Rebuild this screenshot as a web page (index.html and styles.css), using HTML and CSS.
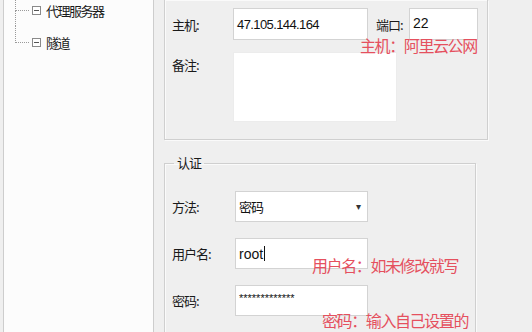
FILE: index.html
```html
<!DOCTYPE html>
<html lang="zh-CN">
<head>
    <meta charset="UTF-8">
    <meta name="viewport" content="width=device-width, initial-scale=1.0">
    <title>会话属性</title>
    <link rel="stylesheet" href="styles.css">
</head>
<body>
    <div class="window">
        <div class="tree">
            <ul class="tree-list">
                <li class="node">
                    <span class="branch"><i class="branch-up"></i><i class="branch-down"></i></span>
                    <span class="toggle"></span>
                    <span class="node-text">代理服务器</span>
                </li>
                <li class="node last">
                    <span class="branch"><i class="branch-up"></i><i class="branch-down"></i></span>
                    <span class="toggle"></span>
                    <span class="node-text">隧道</span>
                </li>
            </ul>
        </div>

        <div class="main">
            <div class="group group-conn">
                <div class="row">
                    <span class="label">主机:</span>
                    <div class="field host">47.105.144.164</div>
                    <span class="label port-label">端口:</span>
                    <div class="field port">22</div>
                </div>
                <div class="row row-top">
                    <span class="label">备注:</span>
                    <div class="field memo"></div>
                </div>
            </div>

            <fieldset class="group group-auth">
                <legend class="legend">认证</legend>
                <div class="auth-row">
                    <span class="label">方法:</span>
                    <div class="field combo"><span class="combo-text">密码</span><span class="combo-arrow">&#9662;</span></div>
                </div>
                <div class="auth-row">
                    <span class="label">用户名:</span>
                    <div class="field"><span class="latin">root</span><span class="caret"></span></div>
                </div>
                <div class="auth-row">
                    <span class="label">密码:</span>
                    <div class="field"><span class="stars">*************</span></div>
                </div>
                <div class="auth-row">
                    <span class="label"></span>
                    <div class="field"></div>
                </div>
            </fieldset>
        </div>

        <!-- 视频里的红色批注 -->
        <span class="note note-host">主机：阿里云公网</span>
        <span class="note note-user">用户名：如未修改就写</span>
        <span class="note note-pass">密码：输入自己设置的</span>
    </div>
</body>
</html>
```

FILE: styles.css
```css
body {
    margin: 0;
    background-color: #efefef;
    font-family: "Noto Sans CJK SC", "Liberation Sans", sans-serif;
    color: #222;
    overflow: hidden;
}
.window {
    position: relative;
    display: flex;
    width: 532px;
    height: 332px;
    overflow: hidden;
}

/* 左边的树 */
.tree {
    width: 151px;
    height: 332px;
    box-sizing: border-box;
    margin-left: 3px;
    background-color: #fcfcfc;
    border-left: 1px solid #cdcdcd;
    border-right: 1px solid #cdcdcd;
}
.tree-list {
    list-style: none;
    margin: -6px 0 0 0;
    padding: 0 0 0 11px;
}
.node {
    display: flex;
    align-items: center;
    height: 32px;
}
.branch {
    display: flex;
    flex-direction: column;
    width: 14px;
    height: 100%;
}
.branch i {
    display: block;
    flex: 1;
    border-left: 1px dotted #9a9a9a;
}
.branch-up {
    border-bottom: 1px dotted #9a9a9a;
}
.node.last .branch-down {
    border-left-color: transparent;
}
.toggle {
    position: relative;
    width: 7px;
    height: 7px;
    margin-left: 3px;
    border: 1px solid #8a8a8a;
    background-color: #fff;
}
.toggle::after {
    content: "";
    position: absolute;
    left: 1px;
    right: 1px;
    top: 3px;
    height: 1px;
    background-color: #555;
}
.node-text {
    margin-left: 5px;
    font-size: 13px;
    letter-spacing: -1.5px;
    color: #1a1a1a;
}

/* 右边的表单 */
.main {
    margin-left: 10px;
}
.group {
    box-sizing: border-box;
    border: 1px solid #cfcfcf;
    box-shadow: inset 1px 1px 0 #fafafa, 1px 1px 0 #fafafa;
}
.group-conn {
    width: 324px;
    border-top: none;
    padding: 8px 9px 17px 7px;
}
.row {
    display: flex;
    align-items: center;
}
.row-top {
    align-items: flex-start;
    margin-top: 12px;
}
.row-top .label {
    margin-top: 3px;
}
.label {
    width: 61px;
    flex-shrink: 0;
    font-size: 13px;
    letter-spacing: -1px;
    color: #1a1a1a;
}
.port-label {
    width: 33px;
    margin-left: 8px;
}
.field {
    display: flex;
    align-items: center;
    box-sizing: border-box;
    height: 31px;
    padding-left: 3px;
    background-color: #fff;
    border: 1px solid #d3d3d3;
    font-family: "Liberation Sans", sans-serif;
    font-size: 14px;
    color: #111;
}
.host {
    width: 135px;
    height: 32px;
    font-size: 13px;
    letter-spacing: -0.6px;
}
.port {
    width: 69px;
    height: 32px;
    align-items: flex-start;
    padding-top: 6px;
    line-height: 16px;
}
.memo {
    width: 164px;
    height: 70px;
    border-color: #ececec;
}

.group-auth {
    width: 312px;
    margin: 15px 0 0 0;
    padding: 20px 0 0 7px;
}
.legend {
    margin-left: 2px;
    padding: 0 3px 0 3px;
    font-size: 13px;
    line-height: 16px;
    letter-spacing: -1px;
    color: #1a1a1a;
}
.auth-row {
    display: flex;
    align-items: center;
    margin-bottom: 16px;
}
.auth-row .label {
    width: 63px;
}
.auth-row .field {
    width: 133px;
}
.combo {
    justify-content: space-between;
    padding-right: 6px;
}
.combo-text {
    font-family: "Noto Sans CJK SC", sans-serif;
    font-size: 13px;
    letter-spacing: -1px;
}
.combo-arrow {
    font-size: 10px;
    color: #333;
}
.caret {
    display: inline-block;
    width: 1px;
    height: 15px;
    margin-left: 1px;
    background-color: #111;
}
.stars {
    font-size: 11px;
    margin-top: -6px;
}

/* 批注 */
.note {
    position: absolute;
    font-size: 16px;
    line-height: 16px;
    letter-spacing: -1.4px;
    color: #e5505e;
    white-space: nowrap;
}
.note-host {
    left: 360px;
    top: 37px;
}
.note-user {
    left: 312px;
    top: 257px;
}
.note-pass {
    left: 322px;
    top: 312px;
}
```
